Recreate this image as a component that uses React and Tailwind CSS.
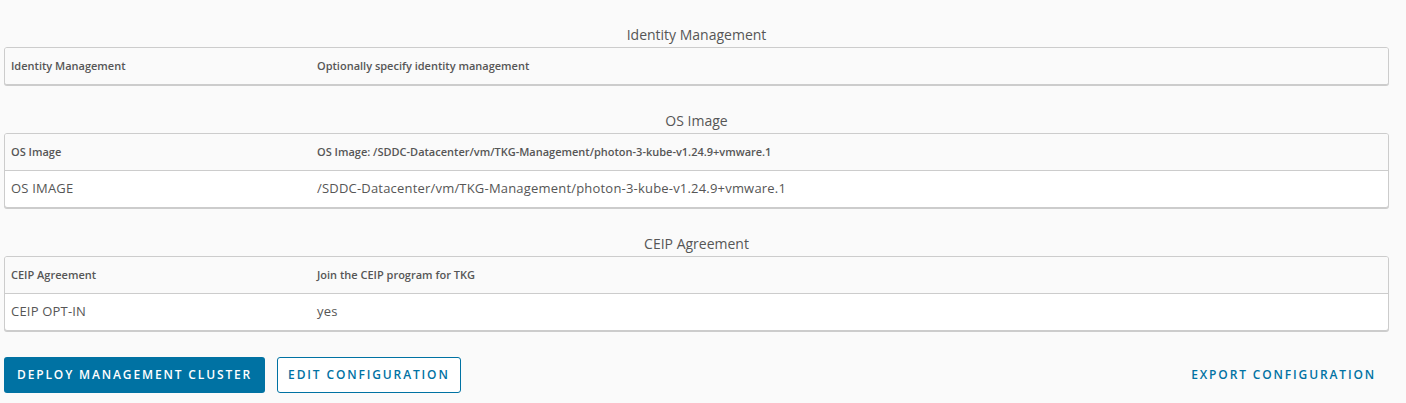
const sections = [
  {
    title: 'Identity Management',
    head: ['Identity Management', 'Optionally specify identity management'],
    rows: [],
  },
  {
    title: 'OS Image',
    head: ['OS Image', 'OS Image: /SDDC-Datacenter/vm/TKG-Management/photon-3-kube-v1.24.9+vmware.1'],
    rows: [['OS IMAGE', '/SDDC-Datacenter/vm/TKG-Management/photon-3-kube-v1.24.9+vmware.1']],
  },
  {
    title: 'CEIP Agreement',
    head: ['CEIP Agreement', 'Join the CEIP program for TKG'],
    rows: [['CEIP OPT-IN', 'yes']],
  },
];

function Section({ section }) {
  return (
    <div className="mt-6 first:mt-0">
      <h4 className="h-6 text-center text-[14px] leading-6 text-[#565656]">{section.title}</h4>
      <div className="overflow-hidden rounded-[3px] border border-[#cccccc] shadow-[0_1px_0_#cccccc] bg-white">
        <div className="flex h-[36px] items-center bg-[#fafafa] text-[11px] font-semibold text-[#565656]">
          <div className="w-[312px] pl-[6px]">{section.head[0]}</div>
          <div className="flex-1">{section.head[1]}</div>
        </div>
        {section.rows.map((row) => (
          <div key={row[0]} className="flex h-[37px] items-center border-t border-[#cccccc] text-[13px] tracking-[0.015em] text-[#565656]">
            <div className="w-[312px] pl-[6px]">{row[0]}</div>
            <div className="flex-1">{row[1]}</div>
          </div>
        ))}
      </div>
    </div>
  );
}

export default function App() {
  return (
    <div className="min-h-[403px] bg-[#fafafa] pl-[4px] pr-[17px] pt-[23px] font-['Open_Sans',sans-serif]">
      {sections.map((s) => (
        <Section key={s.title} section={s} />
      ))}
      <div className="mt-[26px] flex items-center">
        <button className="h-[36px] rounded-[3px] bg-[#0072a3] px-[13px] text-[12px] font-semibold uppercase tracking-[0.155em] text-white">
          Deploy Management Cluster
        </button>
        <button className="ml-3 h-[36px] rounded-[3px] border border-[#0072a3] bg-white px-[10px] text-[12px] font-semibold uppercase tracking-[0.155em] text-[#0072a3]">
          Edit Configuration
        </button>
        <button className="ml-auto mr-[1px] h-[36px] px-[12px] text-[12px] font-semibold uppercase tracking-[0.155em] text-[#0072a3]">
          Export Configuration
        </button>
      </div>
    </div>
  );
}
